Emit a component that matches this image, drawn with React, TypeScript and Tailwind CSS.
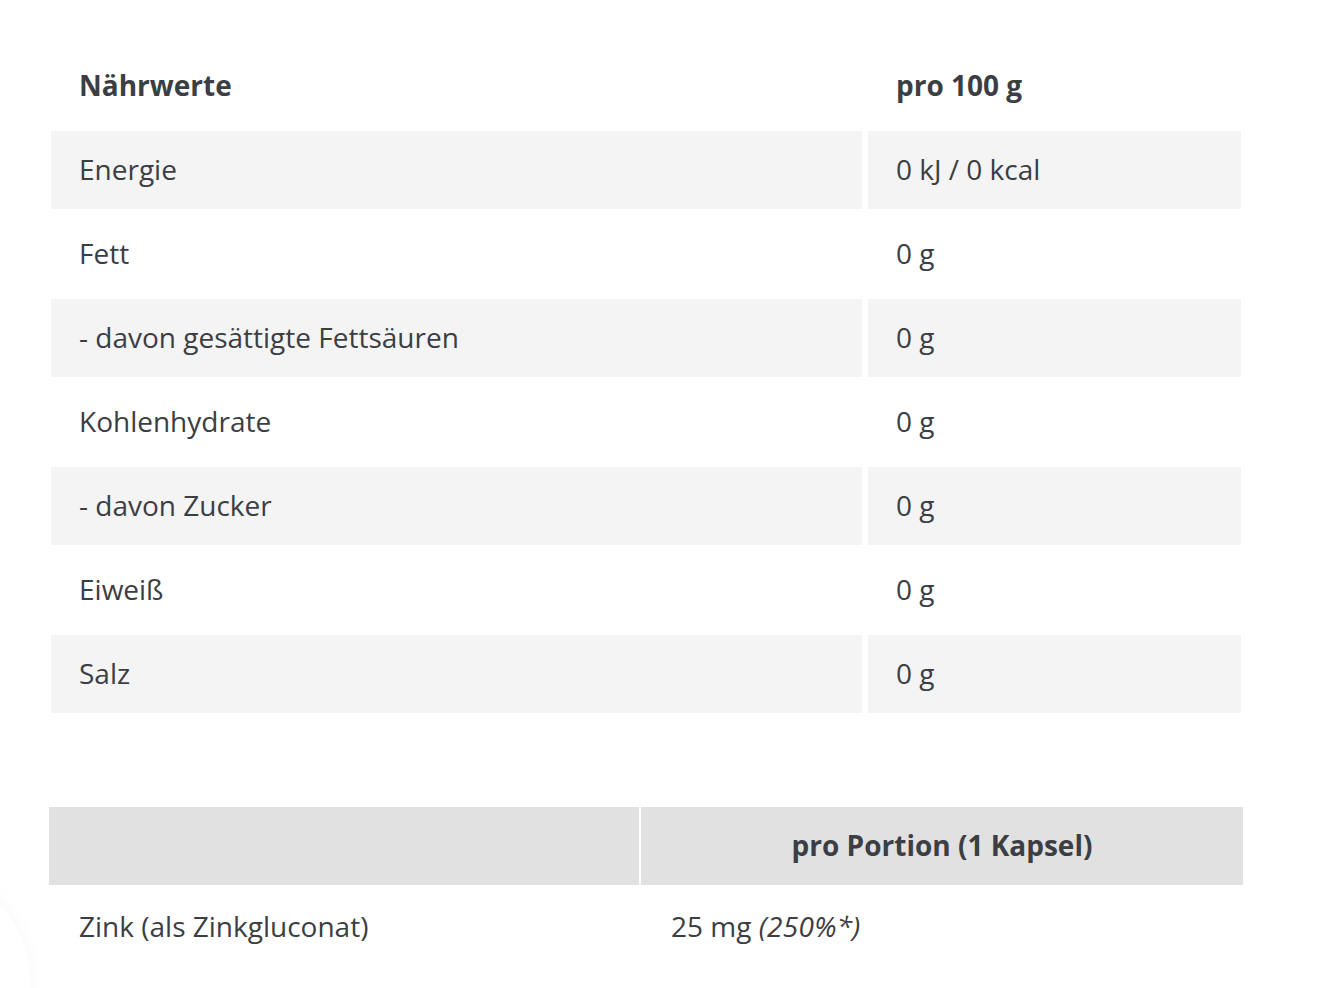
import React from 'react';

const rows: [string, string][] = [
  ['Energie', '0 kJ / 0 kcal'],
  ['Fett', '0 g'],
  ['- davon gesättigte Fettsäuren', '0 g'],
  ['Kohlenhydrate', '0 g'],
  ['- davon Zucker', '0 g'],
  ['Eiweiß', '0 g'],
  ['Salz', '0 g'],
];

const App: React.FC = () => {
  return (
    <div
      className="relative min-h-[988px] overflow-hidden bg-white text-[28px] text-[#3b3e43]"
      style={{ fontFamily: '"Open Sans", "Noto Sans", sans-serif' }}
    >
      {/* Nutrition table */}
      <div className="pt-[41px] pl-[45px]">
        <table className="w-[1202px] table-fixed border-separate border-spacing-[6px]">
          <colgroup>
            <col className="w-[811px]" />
            <col className="w-[373px]" />
          </colgroup>
          <thead>
            <tr>
              <th className="h-[78px] pl-[28px] pr-[28px] pb-[2px] text-left font-bold">Nährwerte</th>
              <th className="h-[78px] pl-[28px] pr-[28px] pb-[2px] text-left font-bold">pro 100 g</th>
            </tr>
          </thead>
          <tbody>
            {rows.map(([label, value], i) => (
              <tr key={label}>
                <td className={`h-[78px] pl-[28px] pr-[28px] pb-[2px] ${i % 2 === 0 ? 'bg-[#f4f4f4]' : 'bg-white'}`}>{label}</td>
                <td className={`h-[78px] pl-[28px] pr-[28px] pb-[2px] ${i % 2 === 0 ? 'bg-[#f4f4f4]' : 'bg-white'}`}>{value}</td>
              </tr>
            ))}
          </tbody>
        </table>
      </div>

      {/* Ingredients per portion */}
      <div className="mt-[86px] pl-[47px]">
        <table className="w-[1198px] table-fixed border-separate border-spacing-[2px]">
          <colgroup>
            <col className="w-[590px]" />
            <col className="w-[602px]" />
          </colgroup>
          <thead>
            <tr>
              <th className="h-[78px] bg-[#e1e1e1]"></th>
              <th className="h-[78px] pb-[2px] bg-[#e1e1e1] text-center font-bold">pro Portion (1 Kapsel)</th>
            </tr>
          </thead>
          <tbody>
            <tr>
              <td className="h-[80px] px-[30px] pb-[2px]">Zink (als Zinkgluconat)</td>
              <td className="h-[80px] px-[30px] pb-[2px]">
                25 mg <em className="tracking-[0.3px]">(250%*)</em>
              </td>
            </tr>
          </tbody>
        </table>
      </div>

      {/* floating button shadow peeking in at the lower left */}
      <div className="absolute left-[-190px] top-[870px] h-[240px] w-[220px] rounded-full bg-white shadow-[0_0_20px_rgba(0,0,0,0.035)]"></div>
    </div>
  );
};

export default App;
